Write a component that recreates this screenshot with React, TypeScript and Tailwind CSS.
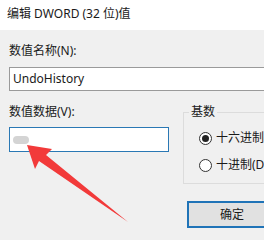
const font = "font-['Segoe_UI','Noto_Sans','Noto_Sans_CJK_SC',sans-serif]"

function Radio({ checked, label }: { checked?: boolean; label: string }) {
  return (
    <div className="flex items-center gap-[4px] h-[14px]">
      <span className="flex h-[13px] w-[13px] shrink-0 items-center justify-center rounded-full border border-[#333] bg-white">
        {checked && <span className="h-[7px] w-[7px] rounded-full bg-[#222]" />}
      </span>
      <span className="whitespace-nowrap text-[12px] leading-[14px] text-[#1a1a1a]">{label}</span>
    </div>
  )
}

export default function App() {
  return (
    <div className={`relative flex h-[240px] w-[264px] flex-col overflow-hidden bg-[#f0f0f0] ${font}`}>
      <div className="flex h-[30px] shrink-0 items-center bg-white pl-[7px] pb-[2px] text-[12px] text-[#1a1a1a] whitespace-nowrap">
        编辑 DWORD (32 位)值
      </div>

      <div className="flex flex-col pl-[9px] pt-[14px]">
        <div className="text-[12px] leading-[14px] text-[#1a1a1a]">数值名称(N):</div>
        <div className="mt-[9px] flex h-[24px] w-[280px] items-center border border-[#9a9a9a] bg-white pl-[3px] text-[12px] text-[#1a1a1a]">
          UndoHistory
        </div>

        <div className="mt-[14px] flex">
          <div className="flex w-[174px] shrink-0 flex-col">
            <div className="text-[12px] leading-[14px] text-[#1a1a1a]">数值数据(V):</div>
            <div className="mt-[8px] flex h-[25px] w-[160px] items-center border border-[#2a78b4] bg-white pl-[3px]">
              <span className="h-[8px] w-[16px] rounded-full bg-[#d4d4d4]" />
            </div>
          </div>

          <div className="flex flex-col">
            <div className="relative mt-[7px] h-[72px] w-[100px] border border-[#dcdcdc]">
              <span className="absolute -top-[8px] left-[5px] bg-[#f0f0f0] px-[2px] text-[12px] leading-[14px] text-[#1a1a1a]">
                基数
              </span>
              <div className="flex flex-col gap-[13px] pl-[15px] pt-[18px]">
                <Radio checked label="十六进制(H)" />
                <Radio label="十进制(D)" />
              </div>
            </div>
            <div className="ml-[4px] mt-[17px] flex h-[27px] w-[90px] items-center justify-center border-2 border-[#1f73b7] bg-[#e1e1e1] text-[12px] text-[#1a1a1a]">
              确定
            </div>
          </div>
        </div>
      </div>

      <svg className="pointer-events-none absolute left-0 top-0" width="264" height="240" viewBox="0 0 264 240">
        <polygon points="27,145 52,149 46,155 128,222 39,161 35,169" fill="#f23a3a" />
      </svg>
    </div>
  )
}
